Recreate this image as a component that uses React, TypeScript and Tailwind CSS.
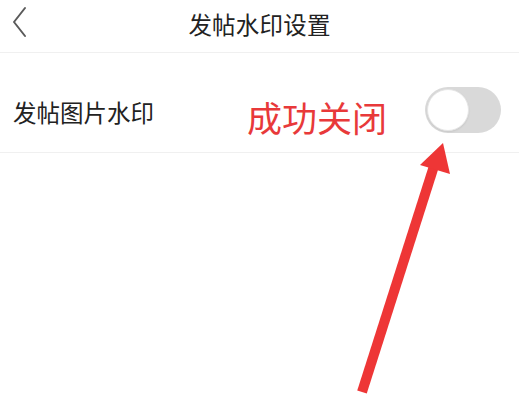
import React from "react";

const font = { fontFamily: '"Noto Sans CJK SC", "Noto Sans", sans-serif' };

function Toggle({ on }: { on: boolean }) {
  return (
    <div
      className={`w-[76px] h-[46px] rounded-full p-[2px] flex ${
        on ? "bg-[#e8393a] justify-end" : "bg-[#d9d9d9] justify-start"
      }`}
    >
      <div className="w-[42px] h-[42px] rounded-full bg-white border border-[#e6e6e6] shadow-[0_1px_2px_rgba(0,0,0,0.08)]" />
    </div>
  );
}

export default function App() {
  return (
    <div className="relative w-[519px] h-[401px] bg-white overflow-hidden" style={font}>
      {/* header */}
      <div className="relative h-[53px] flex items-center justify-center border-b border-[#f0f0f0]">
        <svg className="absolute left-[11px] top-[6px]" width="20" height="32" viewBox="0 0 20 32">
          <path d="M14 2 L3 16 L14 30" fill="none" stroke="#5a5a5a" strokeWidth="2" strokeLinecap="round" strokeLinejoin="round" />
        </svg>
        <h1 className="text-[23.5px] leading-none text-[#222] tracking-[0.2px] -mt-[2px]">发帖水印设置</h1>
      </div>

      {/* row */}
      <div className="h-[100px] flex items-center pl-[13px] pr-[18px] border-b border-[#f0f0f0]">
        <span className="text-[23.5px] leading-none text-[#222] translate-y-[10px]">发帖图片水印</span>
        <span className="ml-auto mr-[38px] text-[35px] leading-none text-[#e8393a] translate-y-[14px]">成功关闭</span>
        <div className="translate-y-[7px]">
          <Toggle on={false} />
        </div>
      </div>

      {/* annotation arrow */}
      <svg className="absolute left-0 top-0 pointer-events-none" width="519" height="401" viewBox="0 0 519 401">
        <line x1="362" y1="392" x2="434" y2="166" stroke="#ee3636" strokeWidth="10" />
        <polygon points="443,143 420,165 450,174" fill="#ee3636" />
      </svg>
    </div>
  );
}
